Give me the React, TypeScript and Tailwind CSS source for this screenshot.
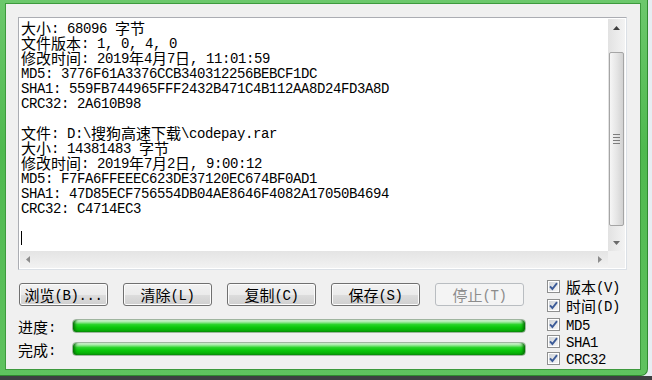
import React from "react";

const CJK = /([\u2E80-\u9FFF\u3000-\u303F\uFF00-\uFFEF]+)/;

const Mixed = ({ t }: { t: string }) => (
  <>
    {t.split(CJK).map((s, i) =>
      CJK.test(s) ? (
        <span
          key={i}
          className="inline-block align-top h-[15px] leading-[15px] font-['Noto_Sans_CJK_SC',sans-serif] text-[15px] tracking-normal"
        >
          {s}
        </span>
      ) : (
        <span key={i} className="relative top-[2px] inline-block align-top h-[15px] leading-[15px] whitespace-pre">
          {s}
        </span>
      )
    )}
  </>
);

const lines = [
  "大小: 68096 字节",
  "文件版本: 1, 0, 4, 0",
  "修改时间: 2019年4月7日, 11:01:59",
  "MD5: 3776F61A3376CCB340312256BEBCF1DC",
  "SHA1: 559FB744965FFF2432B471C4B112AA8D24FD3A8D",
  "CRC32: 2A610B98",
  "",
  "文件: D:\\搜狗高速下载\\codepay.rar",
  "大小: 14381483 字节",
  "修改时间: 2019年7月2日, 9:00:12",
  "MD5: F7FA6FFEEEC623DE37120EC674BF0AD1",
  "SHA1: 47D85ECF756554DB04AE8646F4082A17050B4694",
  "CRC32: C4714EC3",
  "",
];

const buttons = [
  { label: "浏览(B)...", disabled: false },
  { label: "清除(L)", disabled: false },
  { label: "复制(C)", disabled: false },
  { label: "保存(S)", disabled: false },
  { label: "停止(T)", disabled: true },
];

const checks = [
  { label: "版本(V)", h: "h-[20px]" },
  { label: "时间(D)", h: "h-[19px]" },
  { label: "MD5", h: "h-[18px]" },
  { label: "SHA1", h: "h-[17px]" },
  { label: "CRC32", h: "h-[16px]" },
];

const CheckBox = () => (
  <svg width="13" height="13" viewBox="0 0 13 13" className="shrink-0">
    <defs>
      <linearGradient id="cbIn" x1="0" y1="0" x2="1" y2="1">
        <stop offset="0" stopColor="#cfd3d8" />
        <stop offset="1" stopColor="#f6f6f6" />
      </linearGradient>
    </defs>
    <rect x="0.5" y="0.5" width="12" height="12" fill="#fff" stroke="#8e8f8f" />
    <rect x="2" y="2" width="9" height="9" fill="url(#cbIn)" />
    <path d="M3 6.3 L5.4 9 L10 3.2" fill="none" stroke="#3c5b98" strokeWidth="1.9" />
  </svg>
);

const Progress = () => (
  <div className="w-[454px] h-[14px] rounded-[4px] border border-[#9fb59f] bg-[linear-gradient(to_bottom,#e4f9e4_0%,#9be89b_18%,#2ad42a_38%,#0cc80c_60%,#07b507_82%,#0a8e0a_100%)] shadow-[inset_4px_0_3px_-2px_#057005,inset_-4px_0_3px_-2px_#057005]" />
);

const VScroll = () => (
  <div className="w-[17px] flex flex-col bg-[linear-gradient(to_right,#e2e2e2,#f3f3f3)]">
    <div className="h-[17px] flex items-center justify-center">
      <svg width="7" height="4" viewBox="0 0 7 4">
        <path d="M0 4 L3.5 0 L7 4 Z" fill="#3f3f3f" />
      </svg>
    </div>
    <div className="h-[16px]" />
    <div className="mx-[1px] h-[174px] rounded-[2px] border border-[#a5a5a5] bg-[linear-gradient(to_right,#f6f6f6,#e4e4e4_55%,#d2d2d2)] flex flex-col items-center justify-center gap-[2px]">
      <div className="w-[7px] h-[1px] bg-[#7d7d7d]" />
      <div className="w-[7px] h-[1px] bg-[#7d7d7d]" />
      <div className="w-[7px] h-[1px] bg-[#7d7d7d]" />
      <div className="w-[7px] h-[1px] bg-[#7d7d7d]" />
    </div>
    <div className="flex-1" />
    <div className="h-[17px] flex items-center justify-center">
      <svg width="7" height="4" viewBox="0 0 7 4">
        <path d="M0 0 L7 0 L3.5 4 Z" fill="#6a6a6a" />
      </svg>
    </div>
  </div>
);

const HScroll = () => (
  <div className="flex-1 flex items-center justify-between px-[6px] bg-[linear-gradient(to_bottom,#e4e4e4,#f2f2f2)]">
    <svg width="4" height="7" viewBox="0 0 4 7">
      <path d="M4 0 L0 3.5 L4 7 Z" fill="#8c8c8c" />
    </svg>
    <svg width="4" height="7" viewBox="0 0 4 7">
      <path d="M0 0 L4 3.5 L0 7 Z" fill="#8c8c8c" />
    </svg>
  </div>
);

const App = () => {
  return (
    <div className="w-[652px] h-[380px] flex flex-col overflow-hidden bg-[#e7edf2]">
      <div className="w-[648px] h-[376px] rounded-br-[7px] border-r border-b border-[#2f8a2f] bg-[linear-gradient(to_bottom,#6cc86c,#4fb94f_40%,#5fc25f)] pt-[3px] pl-[5px] pr-[6px] pb-[5px] flex">
        <div className="flex-1 bg-[#f0f0f0] border border-[#3d9a3d] pl-[12px] pt-[13px] flex flex-col font-['Liberation_Mono','Noto_Sans_CJK_SC',monospace] text-[14px] tracking-[-0.4px] text-black">
          {/* output box */}
          <div className="w-[609px] h-[253px] border border-[#abadb3] border-b-[#dbe0e6] border-r-[#dbe0e6] bg-white p-[1px] flex flex-col">
            <div className="flex flex-1 min-h-0">
              <div className="flex-1 pl-[1px] pt-[1px] overflow-hidden">
                {lines.map((l, i) => (
                  <div key={i} className="h-[15px] leading-[15px] whitespace-pre">
                    <Mixed t={l} />
                  </div>
                ))}
                <div className="h-[15px] flex items-center">
                  <div className="w-[1px] h-[14px] bg-black" />
                </div>
              </div>
              <VScroll />
            </div>
            <div className="flex h-[17px]">
              <HScroll />
              <div className="w-[17px] bg-[#f0f0f0]" />
            </div>
          </div>

          <div className="flex mt-[13px]">
            <div className="w-[508px] flex flex-col">
              <div className="flex gap-[15px] pl-[1px]">
                {buttons.map((b) => (
                  <div
                    key={b.label}
                    className={
                      b.disabled
                        ? "w-[89px] h-[23px] rounded-[3px] border border-[#b9bdc1] bg-[#f4f4f4] text-[#8c8c8c] flex items-center justify-center leading-[15px]"
                        : "w-[89px] h-[23px] rounded-[3px] border border-[#707070] bg-[linear-gradient(to_bottom,#f2f2f2_0%,#ebebeb_50%,#dddddd_51%,#cfcfcf_100%)] shadow-[inset_0_0_0_1px_#fcfcfc] flex items-center justify-center leading-[15px]"
                    }
                  >
                    <div className="h-[15px] whitespace-pre">
                      <Mixed t={b.label} />
                    </div>
                  </div>
                ))}
              </div>
              <div className="flex items-center h-[14px] mt-[13px]">
                <div className="w-[54px] h-[15px] leading-[15px] whitespace-pre">
                  <Mixed t="进度:" />
                </div>
                <Progress />
              </div>
              <div className="flex items-center h-[14px] mt-[9px]">
                <div className="w-[54px] h-[15px] leading-[15px] whitespace-pre">
                  <Mixed t="完成:" />
                </div>
                <Progress />
              </div>
            </div>
            <div className="ml-[21px] -mt-[7px] flex flex-col">
              {checks.map((c) => (
                <div key={c.label} className={`${c.h} flex items-center gap-[6px]`}>
                  <CheckBox />
                  <div className="h-[15px] leading-[15px] whitespace-pre">
                    <Mixed t={c.label} />
                  </div>
                </div>
              ))}
            </div>
          </div>
        </div>
      </div>
      <div className="h-[4px] bg-[#3d3f42]" />
    </div>
  );
};

export default App;
